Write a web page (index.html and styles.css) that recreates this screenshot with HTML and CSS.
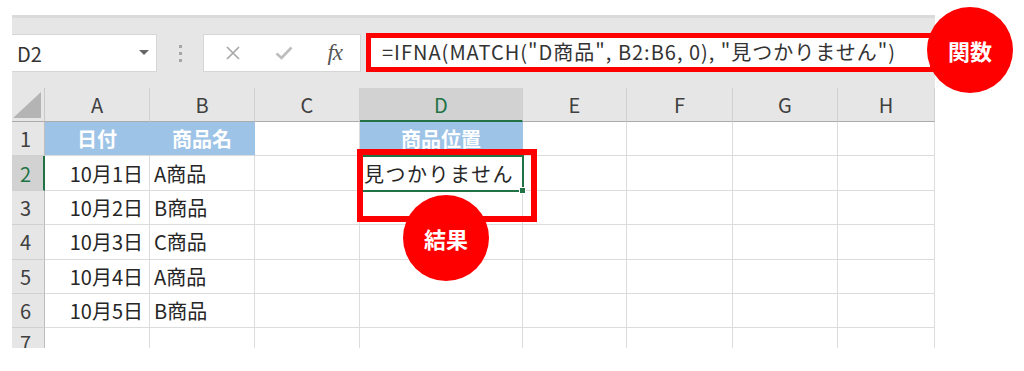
FILE: index.html
```html
<!DOCTYPE html>
<html lang="ja">
<head>
    <meta charset="UTF-8">
    <meta name="viewport" content="width=device-width, initial-scale=1.0">
    <title>IFNA MATCH</title>
    <link rel="stylesheet" href="styles.css">
</head>
<body>
    <div class="sheet">
        <!-- Formula bar -->
        <div class="toolbar">
            <div class="namebox">
                <span>D2</span>
                <span class="caret"></span>
            </div>
            <div class="grip"><i></i><i></i><i></i></div>
            <div class="fxbtns">
                <span class="slot">
                    <svg width="16" height="16" viewBox="0 0 16 16"><path d="M2 2 L14 14 M14 2 L2 14" stroke="#a6a6a6" stroke-width="1.6" fill="none"/></svg>
                </span>
                <span class="slot">
                    <svg width="18" height="14" viewBox="0 0 18 14"><path d="M1.5 7.5 L6.5 12 L16.5 1.5" stroke="#bdbdbd" stroke-width="2.6" fill="none"/></svg>
                </span>
                <span class="slot fx">fx</span>
            </div>
            <div class="formula">=IFNA(MATCH("D商品", B2:B6, 0), "見つかりません")</div>
        </div>

        <!-- Grid -->
        <div class="grid">
            <div class="corner"><span></span></div>
            <div class="colhead">A</div>
            <div class="colhead">B</div>
            <div class="colhead">C</div>
            <div class="colhead active">D</div>
            <div class="colhead">E</div>
            <div class="colhead">F</div>
            <div class="colhead">G</div>
            <div class="colhead">H</div>

            <div class="rowhead">1</div>
            <div class="cell title">日付</div>
            <div class="cell title">商品名</div>
            <div class="cell"></div>
            <div class="cell title">商品位置</div>
            <div class="cell"></div><div class="cell"></div><div class="cell"></div><div class="cell"></div>

            <div class="rowhead active">2</div>
            <div class="cell num">10月1日</div>
            <div class="cell">A商品</div>
            <div class="cell"></div>
            <div class="cell selected">見つかりません<span class="handle"></span></div>
            <div class="cell"></div><div class="cell"></div><div class="cell"></div><div class="cell"></div>

            <div class="rowhead">3</div>
            <div class="cell num">10月2日</div>
            <div class="cell">B商品</div>
            <div class="cell"></div><div class="cell"></div><div class="cell"></div><div class="cell"></div><div class="cell"></div><div class="cell"></div>

            <div class="rowhead">4</div>
            <div class="cell num">10月3日</div>
            <div class="cell">C商品</div>
            <div class="cell"></div><div class="cell"></div><div class="cell"></div><div class="cell"></div><div class="cell"></div><div class="cell"></div>

            <div class="rowhead">5</div>
            <div class="cell num">10月4日</div>
            <div class="cell">A商品</div>
            <div class="cell"></div><div class="cell"></div><div class="cell"></div><div class="cell"></div><div class="cell"></div><div class="cell"></div>

            <div class="rowhead">6</div>
            <div class="cell num">10月5日</div>
            <div class="cell">B商品</div>
            <div class="cell"></div><div class="cell"></div><div class="cell"></div><div class="cell"></div><div class="cell"></div><div class="cell"></div>

            <div class="rowhead last">7</div>
            <div class="cell"></div><div class="cell"></div><div class="cell"></div><div class="cell"></div>
            <div class="cell"></div><div class="cell"></div><div class="cell"></div><div class="cell"></div>
        </div>
    </div>

    <!-- Annotations -->
    <div class="mark-result"></div>
    <div class="badge badge-fn">関数</div>
    <div class="badge badge-result">結果</div>
</body>
</html>
```

FILE: styles.css
```css
* {
    margin: 0;
    padding: 0;
    box-sizing: border-box;
}

body {
    font-family: "Noto Sans CJK JP", "Noto Sans", sans-serif;
    background: #fff;
    color: #262626;
    position: relative;
    width: 1024px;
    height: 371px;
    overflow: hidden;
}

.sheet {
    margin: 15px 0 0 12px;
    width: 923px;
    height: 333px;
    overflow: hidden;
    background: #e6e6e6;
}

/* Formula bar */
.toolbar {
    display: flex;
    align-items: flex-start;
    height: 73px;
    padding-top: 16px;
    border-top: 3px solid #dadada;
    background: #e6e6e6;
}

.namebox {
    width: 145px;
    height: 38px;
    background: #fff;
    border: 1px solid #d6d6d6;
    border-left: none;
    display: flex;
    align-items: center;
    justify-content: space-between;
    padding: 0 7px 0 5px;
    font-size: 20px;
    color: #333;
}

.caret {
    width: 0;
    height: 0;
    border-left: 5px solid transparent;
    border-right: 5px solid transparent;
    border-top: 5px solid #666;
    margin-top: -2px;
}

.grip {
    width: 46px;
    height: 38px;
    display: flex;
    flex-direction: column;
    align-items: center;
    justify-content: center;
    gap: 4px;
}

.grip i {
    width: 3px;
    height: 3px;
    background: #a6a6a6;
}

.fxbtns {
    width: 158px;
    height: 38px;
    background: #fff;
    border: 1px solid #d6d6d6;
    display: flex;
    align-items: center;
    padding-left: 4px;
}

.slot {
    width: 52px;
    display: flex;
    justify-content: center;
    align-items: center;
}

.fx {
    font-family: "Liberation Serif", serif;
    font-style: italic;
    font-size: 23px;
    color: #555;
    letter-spacing: -1px;
}

.formula {
    flex: 1;
    height: 39px;
    margin: -1px 0 0 5px;
    border: 5px solid #ff0000;
    background: #fff;
    padding-left: 11px;
    font-size: 20px;
    line-height: 28px;
    letter-spacing: 1px;
    color: #333;
    white-space: nowrap;
}

/* Grid */
.grid {
    display: grid;
    grid-template-columns: 33px 105px 105px 105px 163px 104px 106px 105px 97px;
    grid-template-rows: 34px repeat(6, 34.4px) 1fr;
    height: 260px;
    font-size: 20px;
}

.corner {
    background: #e6e6e6;
    border-right: 1px solid #c8c8c8;
    border-bottom: 1px solid #ababab;
    display: flex;
    align-items: flex-end;
    justify-content: flex-end;
    padding: 0 3px 3px 0;
}

.corner span {
    width: 28px;
    height: 26px;
    background: #b4b4b4;
    clip-path: polygon(100% 0, 100% 100%, 0 100%);
}

.colhead {
    background: #e6e6e6;
    border-right: 1px solid #d0d0d0;
    border-bottom: 1px solid #ababab;
    display: flex;
    align-items: center;
    justify-content: center;
    color: #404040;
}

.colhead.active {
    background: #d2d2d2;
    color: #217346;
    border-bottom: 2px solid #217346;
}

.rowhead {
    background: #e6e6e6;
    border-right: 1px solid #bdbdbd;
    border-bottom: 1px solid #d0d0d0;
    display: flex;
    align-items: center;
    padding-left: 8px;
    color: #404040;
}

.rowhead.active {
    background: #d2d2d2;
    color: #217346;
    border-right: 2px solid #217346;
}

.rowhead.last {
    align-items: flex-start;
    border-bottom: none;
}

.cell {
    background: #fff;
    border-right: 1px solid #dcdcdc;
    border-bottom: 1px solid #dcdcdc;
    display: flex;
    align-items: center;
    padding: 0 4px;
    white-space: nowrap;
    color: #262626;
}

.cell.num {
    justify-content: flex-end;
    padding-right: 6px;
}

.cell.title {
    background: #9dc3e6;
    border-right-color: #9dc3e6;
    color: #fff;
    font-weight: bold;
    justify-content: center;
}

.cell.selected {
    position: relative;
    outline: 2px solid #217346;
    outline-offset: -1px;
    letter-spacing: 1.5px;
    z-index: 1;
}

.handle {
    position: absolute;
    right: -4px;
    bottom: -4px;
    width: 7px;
    height: 7px;
    background: #217346;
    border: 1px solid #fff;
}

/* Annotations */
.mark-result {
    position: absolute;
    left: 357px;
    top: 149px;
    width: 180px;
    height: 73px;
    border: 6px solid #ff0000;
    z-index: 2;
}

.badge {
    position: absolute;
    width: 86px;
    height: 86px;
    border-radius: 50%;
    background: #ff0000;
    color: #fff;
    font-weight: bold;
    font-size: 22px;
    display: flex;
    align-items: center;
    justify-content: center;
    z-index: 3;
}

.badge-fn {
    left: 927px;
    top: 7px;
}

.badge-result {
    left: 403px;
    top: 195px;
}
```
